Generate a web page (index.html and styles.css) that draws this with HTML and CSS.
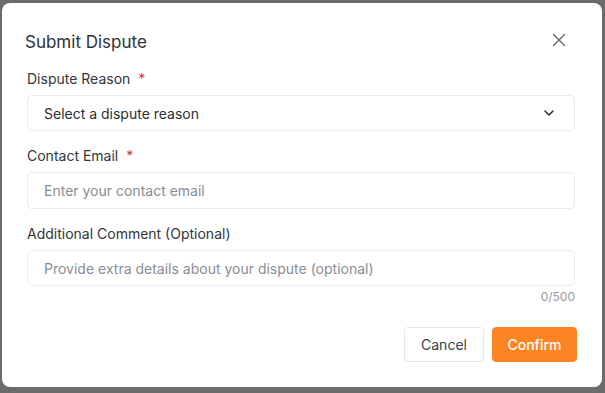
FILE: index.html
```html
<!DOCTYPE html>
<html>
<head>
<meta charset="utf-8">
<link rel="stylesheet" href="styles.css">
</head>
<body>
<div class="modal">
  <div class="header">
    <h2 class="title">Submit Dispute</h2>
    <button class="close" aria-label="Close">
      <svg width="14" height="14" viewBox="0 0 14 14"><path d="M1.5 1.5 L12.5 12.5 M12.5 1.5 L1.5 12.5" stroke="#6b6f78" stroke-width="1.5" stroke-linecap="round" fill="none"/></svg>
    </button>
  </div>
  <div class="form">
    <div class="field">
      <label class="label">Dispute Reason <span class="req">*</span></label>
      <div class="control select">
        <span class="value">Select a dispute reason</span>
        <svg width="12" height="8" viewBox="0 0 12 8"><path d="M2 2 L6 6 L10 2" stroke="#2b2f36" stroke-width="1.6" fill="none" stroke-linecap="round" stroke-linejoin="round"/></svg>
      </div>
    </div>
    <div class="field">
      <label class="label">Contact Email <span class="req">*</span></label>
      <div class="control input tall"><span class="ph">Enter your contact email</span></div>
    </div>
    <div class="field">
      <label class="label">Additional Comment (Optional)</label>
      <div class="control input"><span class="ph">Provide extra details about your dispute (optional)</span></div>
      <div class="counter">0/500</div>
    </div>
  </div>
  <div class="footer">
    <button class="btn cancel">Cancel</button>
    <button class="btn confirm">Confirm</button>
  </div>
</div>
</body>
</html>
```

FILE: styles.css
```css
html, body {
  margin: 0;
  padding: 0;
  background: #6b6b6b;
  height: 393px;
  overflow: hidden;
}
body {
  font-family: Inter, "Noto Sans", sans-serif;
  color: #333;
  padding: 3px 3px 0 2px;
}
.modal {
  background: #fff;
  border-radius: 8px;
  height: 384px;
  box-sizing: border-box;
  display: flex;
  flex-direction: column;
}
.header {
  display: flex;
  align-items: flex-start;
  justify-content: space-between;
  padding: 27px 36px 0 23px;
}
.title {
  margin: 0;
  font-size: 17px;
  font-weight: 400;
  line-height: 24px;
  color: #2f3237;
}
.close {
  border: 0;
  background: none;
  padding: 0;
  margin-top: 3px;
  width: 14px;
  height: 14px;
  display: flex;
  cursor: pointer;
}
.form {
  padding: 15px 27px 0 25px;
  display: flex;
  flex-direction: column;
  gap: 15px;
}
.field {
  display: flex;
  flex-direction: column;
}
.label {
  font-size: 14px;
  line-height: 20px;
  color: #33363b;
  margin-bottom: 6px;
}
.req {
  color: #e03131;
  margin-left: 4px;
}
.control {
  border: 1px solid #ebebeb;
  border-radius: 5px;
  height: 36px;
  box-sizing: border-box;
  display: flex;
  align-items: center;
  padding: 0 16px;
  font-size: 14px;
}
.control.tall {
  height: 37px;
}
.select {
  justify-content: space-between;
  padding-right: 19px;
}
.value {
  color: #2b2f36;
}
.ph {
  color: #8a8d93;
}
.counter {
  text-align: right;
  font-size: 12px;
  line-height: 16px;
  color: #95989e;
  margin-top: 3px;
}
.footer {
  display: flex;
  justify-content: flex-end;
  gap: 8px;
  padding: 22px 25px 0 0;
}
.btn {
  font-family: Inter, "Noto Sans", sans-serif;
  font-size: 14px;
  height: 35px;
  border-radius: 4px;
  cursor: pointer;
}
.cancel {
  width: 80px;
  background: #fff;
  border: 1px solid #e6e6e6;
  color: #3a3e45;
}
.confirm {
  width: 85px;
  background: #fb8522;
  border: 1px solid #fb8522;
  color: #fff;
  font-weight: 500;
}
```
